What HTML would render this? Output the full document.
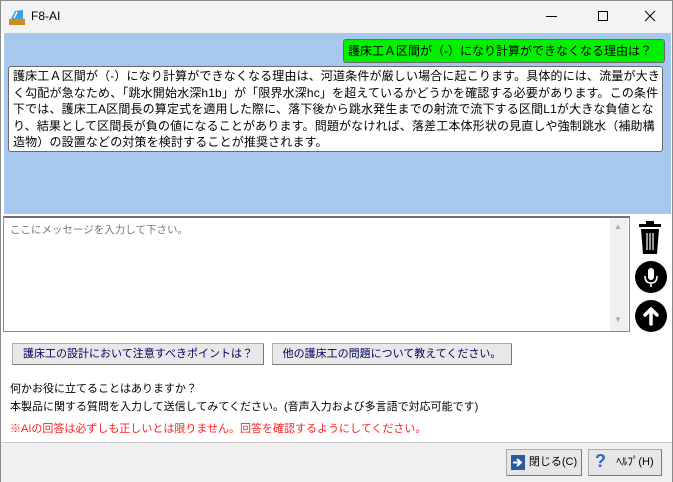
<!DOCTYPE html>
<html><head><meta charset="utf-8"><style>
*{margin:0;padding:0;box-sizing:border-box}
body{width:673px;height:482px;overflow:hidden;background:#fff;font-family:"Liberation Sans","Noto Sans CJK JP",sans-serif;font-size:11px;color:#000;position:relative}
.win{position:absolute;left:0;top:0;width:673px;height:482px;border:1px solid #8a8a8a;background:#fff}
.title{position:absolute;left:0;top:0;width:671px;height:32px;background:#f3f3f3}
.abs{position:absolute;white-space:nowrap}
.btn{position:absolute;background:#e8e8e8;border:1px solid #adadad;border-right-color:#7a7a7a;border-bottom-color:#7a7a7a;font-size:11px;color:#000;text-align:center;white-space:nowrap}
.ans div{white-space:nowrap}
</style></head><body><div class="win">
<div class="title">
 <svg class="abs" style="left:8px;top:8px" width="16" height="16"><rect x="0" y="10" width="16" height="6" fill="#d08a20"/><path d="M2 10 L6 2 L14 1 L14 10 Z" fill="#3aa0e0"/><path d="M5 9 L8 3" stroke="#fff" stroke-width="1.5"/></svg>
 <div class="abs" style="left:30px;top:8px;font-size:12px">F8-AI</div>
 <div class="abs" style="left:545px;top:15px;width:11px;height:1px;background:#000"></div>
 <div class="abs" style="left:597px;top:10px;width:10px;height:10px;border:1px solid #000"></div>
 <svg class="abs" style="left:643px;top:9px" width="12" height="12"><path d="M1 1 L11 11 M11 1 L1 11" stroke="#000" stroke-width="1"/></svg>
</div>
<div class="abs" style="left:3px;top:32px;width:667px;height:181px;background:#a6c8ec"></div>
<div class="abs" style="left:342px;top:38px;width:322px;height:24px;background:#00f000;border:1px solid #6a6a6a;border-radius:3px;font-size:12px;line-height:22px;padding-left:4px">護床工Ａ区間が（-）になり計算ができなくなる理由は？</div>
<div class="abs ans" style="left:7px;top:65px;width:655px;height:86px;background:#fff;border:1px solid #6a6a6a;border-radius:3px;font-size:12px;line-height:16.5px;padding:1px 4px;letter-spacing:0.15px">
<div>護床工Ａ区間が（-）になり計算ができなくなる理由は、河道条件が厳しい場合に起こります。具体的には、流量が大き</div>
<div>く勾配が急なため、「跳水開始水深h1b」が「限界水深hc」を超えているかどうかを確認する必要があります。この条件</div>
<div>下では、護床工A区間長の算定式を適用した際に、落下後から跳水発生までの射流で流下する区間L1が大きな負値とな</div>
<div>り、結果として区間長が負の値になることがあります。問題がなければ、落差工本体形状の見直しや強制跳水（補助構</div>
<div>造物）の設置などの対策を検討することが推奨されます。</div>
</div>
<div class="abs" style="left:2px;top:215px;width:627px;height:116px;border:1px solid #8a8a8a;border-top:2px solid #707070;background:#fff"></div>
<div class="abs" style="left:9px;top:221px;color:#777;font-size:10.5px">ここにメッセージを入力して下さい。</div>
<div class="abs" style="left:609px;top:217px;width:18px;height:113px;background:#f0f0f0"></div>
<div class="abs" style="left:613px;top:221px;color:#aaa;font-size:8px">▲</div>
<div class="abs" style="left:613px;top:314px;color:#aaa;font-size:8px">▼</div>
<svg class="abs" style="left:636px;top:220px" width="28" height="34"><rect x="2" y="3" width="22" height="3" fill="#000"/><rect x="9" y="0" width="8" height="3" fill="#000"/><path d="M4 8 L22 8 L20 33 L6 33 Z" fill="#000"/><path d="M10 12 V29 M13 12 V29 M16 12 V29" stroke="#fff" stroke-width="1.2"/></svg>
<div class="abs" style="left:634px;top:260px;width:32px;height:32px;border-radius:50%;background:#000"></div>
<svg class="abs" style="left:634px;top:260px" width="32" height="32"><rect x="13" y="7" width="6" height="12" rx="3" fill="#fff"/><path d="M10 15 Q10 22 16 22 Q22 22 22 15 M16 22 V26" stroke="#fff" stroke-width="1.6" fill="none"/></svg>
<div class="abs" style="left:634px;top:299px;width:32px;height:32px;border-radius:50%;background:#000"></div>
<svg class="abs" style="left:634px;top:299px" width="32" height="32"><path d="M16 24 V10 M10 15 L16 9 L22 15" stroke="#fff" stroke-width="3.5" fill="none" stroke-linecap="round" stroke-linejoin="round"/></svg>
<div class="btn" style="left:11px;top:342px;width:252px;height:22px;line-height:20px;color:#000060">護床工の設計において注意すべきポイントは？</div>
<div class="btn" style="left:271px;top:342px;width:240px;height:22px;line-height:20px;color:#000060">他の護床工の問題について教えてください。</div>
<div class="abs" style="left:9px;top:379px;line-height:18px;font-size:11px">何かお役に立てることはありますか？<br>本製品に関する質問を入力して送信してみてください。(音声入力および多言語で対応可能です)</div>
<div class="abs" style="left:9px;top:419px;color:#ff2020;font-size:11px">※AIの回答は必ずしも正しいとは限りません。回答を確認するようにしてください。</div>
<div class="abs" style="left:0;top:441px;width:671px;height:40px;background:#f0f0f0;border-top:1px solid #ccc"></div>
<div class="btn" style="left:505px;top:448px;width:76px;height:27px;line-height:25px;padding-left:18px;background:#e6e6e6">閉じる(C)</div>
<svg class="abs" style="left:510px;top:454px" width="14" height="15"><rect x="0" y="0" width="14" height="15" fill="#2a5aa0"/><path d="M2 7.5 H9 M6 4 L10 7.5 L6 11" stroke="#fff" stroke-width="2" fill="none"/></svg>
<div class="btn" style="left:587px;top:448px;width:74px;height:27px;line-height:25px;padding-left:20px;background:#e6e6e6">ﾍﾙﾌﾟ(H)</div>
<div class="abs" style="left:594px;top:450px;color:#2a6ac0;font-size:18px;font-weight:bold">?</div>
</div></body></html>
